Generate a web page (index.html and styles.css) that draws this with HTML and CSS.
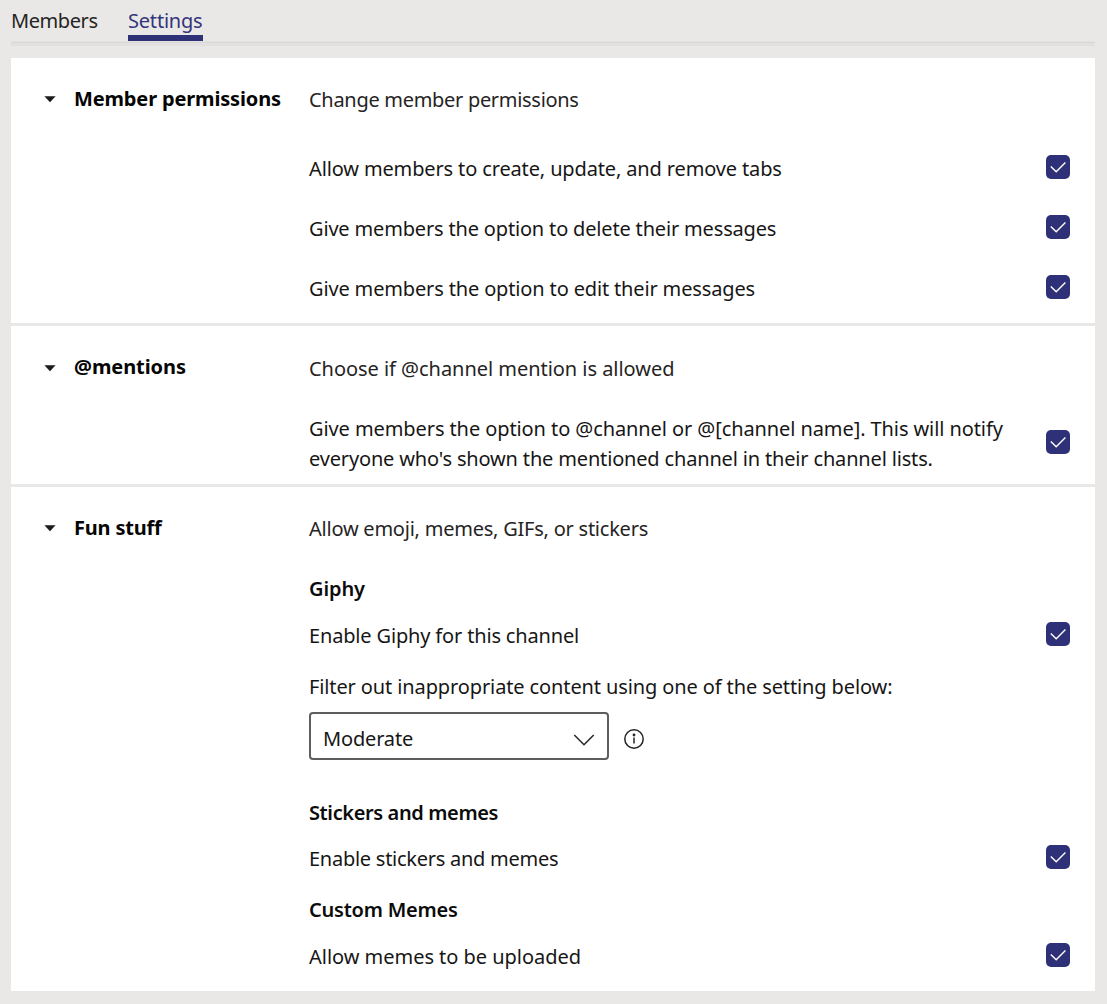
FILE: index.html
```html
<!DOCTYPE html>
<html lang="en">
<head>
<meta charset="utf-8">
<title>Channel settings</title>
<link rel="stylesheet" href="styles.css">
</head>
<body>
<svg class="defs" aria-hidden="true">
  <symbol id="check" viewBox="0 0 24 24"><path d="M4.8 11.4 10.2 16.8 19.4 7.6" fill="none" stroke="#fff" stroke-width="1.4"/></symbol>
  <symbol id="caret" viewBox="0 0 12 7"><path d="M.4.2h11.2L6 6.2z" fill="#1c1b1a"/></symbol>
</svg>
<nav class="tabs">
  <a class="tab"><span class="t-members">Members</span></a>
  <a class="tab active"><span class="t-settings">Settings</span></a>
</nav>
<main class="panels">
  <section class="panel permissions">
    <svg class="caret"><use href="#caret"/></svg>
    <h2 class="title"><span class="h-perm">Member permissions</span></h2>
    <div class="content">
      <p class="intro"><span class="l1">Change member permissions</span></p>
      <div class="row"><p><span class="l2">Allow members to create, update, and remove tabs</span></p><svg class="box"><use href="#check"/></svg></div>
      <div class="row"><p><span class="l3">Give members the option to delete their messages</span></p><svg class="box"><use href="#check"/></svg></div>
      <div class="row"><p><span class="l4">Give members the option to edit their messages</span></p><svg class="box"><use href="#check"/></svg></div>
    </div>
  </section>
  <section class="panel mentions">
    <svg class="caret"><use href="#caret"/></svg>
    <h2 class="title"><span class="h-ment">@mentions</span></h2>
    <div class="content">
      <p class="intro"><span class="l5">Choose if @channel mention is allowed</span></p>
      <div class="row"><p><span class="l6">Give members the option to @channel or @[channel name]. This will notify</span><br><span class="l7">everyone who's shown the mentioned channel in their channel lists.</span></p><svg class="box"><use href="#check"/></svg></div>
    </div>
  </section>
  <section class="panel fun">
    <svg class="caret"><use href="#caret"/></svg>
    <h2 class="title"><span class="h-fun">Fun stuff</span></h2>
    <div class="content">
      <p class="intro"><span class="l8">Allow emoji, memes, GIFs, or stickers</span></p>
      <h3 class="giphy"><span class="s1">Giphy</span></h3>
      <div class="row"><p><span class="l9">Enable Giphy for this channel</span></p><svg class="box"><use href="#check"/></svg></div>
      <p class="filter"><span class="l10">Filter out inappropriate content using one of the setting below:</span></p>
      <div class="picker">
        <div class="select"><span class="l11">Moderate</span>
          <svg class="chevron" viewBox="0 0 22 12"><path d="M1.3 1 11 10.8 20.7 1" fill="none" stroke="#252423" stroke-width="1.5"/></svg></div>
        <svg class="info" viewBox="0 0 22 22"><circle cx="11" cy="11" r="9.2" fill="none" stroke="#252423" stroke-width="1.5"/><circle cx="11" cy="7" r="1.4" fill="#252423"/><path d="M11 9.5v6" stroke="#252423" stroke-width="1.5"/></svg>
      </div>
      <h3 class="stickers"><span class="s2">Stickers and memes</span></h3>
      <div class="row tight"><p><span class="l12">Enable stickers and memes</span></p><svg class="box"><use href="#check"/></svg></div>
      <h3 class="custom"><span class="s3">Custom Memes</span></h3>
      <div class="row"><p><span class="l13">Allow memes to be uploaded</span></p><svg class="box"><use href="#check"/></svg></div>
    </div>
  </section>
</main>
</body>
</html>
```
FILE: styles.css
```css
* { box-sizing: border-box; }
body {
  margin: 0;
  padding: 0 12px 13px 11px;
  background: #e9e8e6;
  color: #171615;
  font: 20px/30px "Noto Sans", "Open Sans", sans-serif;
  letter-spacing: -0.3px;
}
h2, h3, p { margin: 0; font-size: inherit; white-space: nowrap; }
h3 { font-weight: 600; color: #0b0b0b; }
svg { display: block; flex: none; }
.defs { width: 0; height: 0; position: absolute; }

/* Tabs */
.tabs {
  display: flex;
  gap: 30px;
  height: 46px;
  padding-top: 6px;
  background: linear-gradient(#e3e2e0 0 1px, #d9d8d6 1px 2px, #e2e1df 2px 5px) 0 41px / 100% 5px no-repeat;
}
.tab { height: 35px; color: #252423; white-space: nowrap; }
.tab:first-child { width: 87px; }
.tab.active { width: 75px; color: #33347c; border-bottom: 6px solid #2f3178; }

/* Panels */
.panels { display: flex; flex-direction: column; gap: 3px; margin-top: 12px; }
.panel {
  display: grid;
  grid-template-columns: 12px 239px 1fr;
  padding: 27px 25px 19px 33px;
  background: #fff;
}
.caret { width: 12px; height: 7px; margin-top: 11px; }
.title { margin: -1px 0 0 18px; height: 30px; font-weight: 700; color: #050505; }
.content { margin-left: 14px; }
.intro { color: #252423; }
.row { display: flex; justify-content: space-between; align-items: center; margin-top: 30px; }
.permissions .intro + .row { margin-top: 39px; }
.box { width: 24px; height: 24px; margin-top: -4px; border-radius: 5px; background: #2f3178; }

.mentions { padding-top: 28px; padding-bottom: 10px; }
.mentions .title { margin-top: -2px; }

.fun .row { margin-top: 17px; }
.fun .row.tight { margin-top: 16px; }
.giphy { margin-top: 30px; }
.filter { margin-top: 21px; }
.picker { display: flex; align-items: center; gap: 13.5px; margin-top: 10px; }
.select {
  display: flex;
  justify-content: space-between;
  align-items: center;
  width: 300px;
  height: 48px;
  padding: 6px 12px 0;
  border: 2px solid #605e5c;
  border-radius: 4px;
}
.chevron { width: 22px; height: 12px; margin-top: 1px; }
.info { width: 22px; height: 22px; margin-top: 5px; }
.stickers { margin-top: 38px; }
.custom { margin-top: 21px; }

/* Tracking */
.t-members { letter-spacing: -0.42px; }
.t-settings { letter-spacing: -0.2px; }
.h-perm { letter-spacing: -0.15px; }
.h-ment { letter-spacing: -0.08px; }
.h-fun { letter-spacing: -0.2px; }
.l2 { letter-spacing: -0.137px; }
.l3 { letter-spacing: -0.17px; }
.l4 { letter-spacing: -0.15px; }
.l5 { letter-spacing: -0.04px; }
.l6 { letter-spacing: -0.09px; }
.l7 { letter-spacing: -0.165px; }
.l8 { letter-spacing: -0.23px; }
.l9 { letter-spacing: -0.16px; }
.l10 { letter-spacing: -0.115px; }
.l11 { letter-spacing: -0.17px; }
.l12 { letter-spacing: -0.26px; }
.l13 { letter-spacing: -0.03px; }
.s1 { letter-spacing: -0.1px; }
.s2 { letter-spacing: -0.38px; }
.s3 { letter-spacing: -0.22px; }
```
